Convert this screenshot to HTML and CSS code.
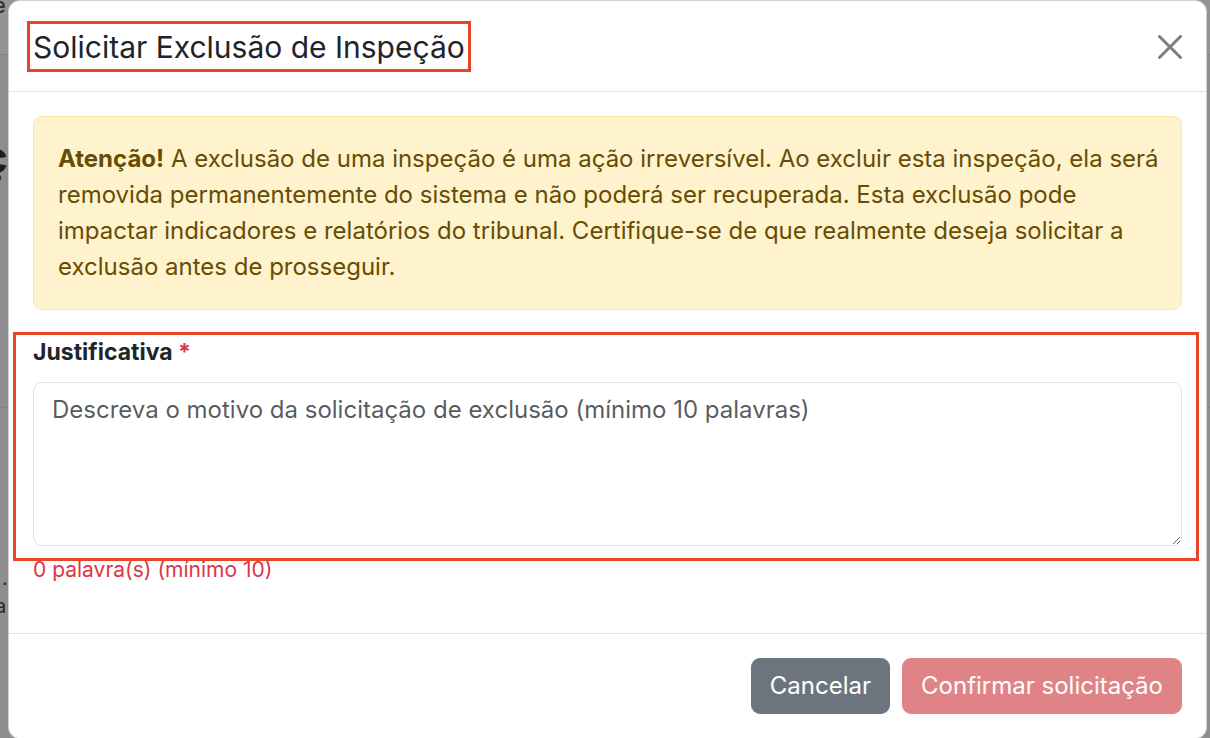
FILE: index.html
```html
<!DOCTYPE html>
<html lang="pt-BR">
<head>
<meta charset="utf-8">
<title>Solicitar Exclusão de Inspeção</title>
<link rel="stylesheet" href="styles.css">
</head>
<body>
<div class="page">
  <div class="page-top"><span class="peek-e">e</span></div>
  <div class="page-main">
    <span class="peek-c">ç</span>
    <div class="peek-line"></div>
    <span class="peek-dot">.</span>
    <span class="peek-a">a</span>
  </div>
</div>

<div class="overlay">
  <div class="modal">
    <div class="modal-header">
      <h5 class="modal-title">Solicitar Exclusão de Inspeção</h5>
      <button class="btn-close" type="button" aria-label="Fechar">
        <svg viewBox="0 0 16 16" width="24" height="24"><path d="M.293.293a1 1 0 0 1 1.414 0L8 6.586 14.293.293a1 1 0 1 1 1.414 1.414L9.414 8l6.293 6.293a1 1 0 0 1-1.414 1.414L8 9.414l-6.293 6.293a1 1 0 0 1-1.414-1.414L6.586 8 .293 1.707a1 1 0 0 1 0-1.414z"/></svg>
      </button>
    </div>
    <div class="modal-body">
      <div class="alert">
        <strong>Atenção!</strong> A exclusão de uma inspeção é uma ação irreversível. Ao excluir esta inspeção, ela será removida permanentemente do sistema e não poderá ser recuperada. Esta exclusão pode impactar indicadores e relatórios do tribunal. Certifique-se de que realmente deseja solicitar a exclusão antes de prosseguir.
      </div>
      <div class="form-group">
        <label class="form-label" for="just">Justificativa <span class="req">*</span></label>
        <textarea id="just" class="form-control" rows="4" placeholder="Descreva o motivo da solicitação de exclusão (mínimo 10 palavras)"></textarea>
        <div class="form-text">0 palavra(s) (mínimo 10)</div>
      </div>
    </div>
    <div class="modal-footer">
      <button class="btn btn-secondary" type="button">Cancelar</button>
      <button class="btn btn-danger" type="button" disabled>Confirmar solicitação</button>
    </div>
    <div class="annot annot-title"></div>
    <div class="annot annot-field"></div>
  </div>
</div>
</body>
</html>
```

FILE: styles.css
```css
* { box-sizing: border-box; }

html, body {
  margin: 0;
  padding: 0;
  width: 1210px;
  height: 738px;
  overflow: hidden;
}

body {
  font-family: Inter, "Noto Sans", "Liberation Sans", sans-serif;
  background: #8e8e8e;
  color: #212529;
  position: relative;
}

/* background page (under the backdrop) */
.page {
  height: 738px;
  display: flex;
  flex-direction: column;
}
.page-top {
  height: 55px;
  background: #939393;
  border-bottom: 1px solid #858585;
  display: flex;
}
.peek-e {
  font-size: 22px;
  line-height: 16px;
  color: #2a2a2a;
  margin-left: -7px;
  margin-top: -3px;
}
.page-main {
  flex: 1;
  display: flex;
  flex-direction: column;
  align-items: flex-start;
}
.peek-c {
  font-size: 44px;
  font-weight: 700;
  color: #1e1e1e;
  margin-left: -18px;
  margin-top: 80px;
  line-height: 44px;
}
.peek-line {
  width: 100%;
  height: 1px;
  background: #858585;
  margin-top: 228px;
}
.peek-dot {
  font-size: 20px;
  color: #2a2a2a;
  margin-top: 160px;
  margin-left: 2px;
  line-height: 20px;
}
.peek-a {
  font-size: 20px;
  color: #2a2a2a;
  margin-top: 8px;
  margin-left: -5px;
  line-height: 20px;
}

/* modal overlay */
.overlay {
  position: absolute;
  inset: 0;
  display: flex;
  align-items: flex-start;
  padding-left: 8px;
}

.modal {
  position: relative;
  width: 1199px;
  height: 739px;
  background: #fff;
  border: 1.5px solid rgba(0, 0, 0, 0.18);
  border-radius: 12px;
  display: flex;
  flex-direction: column;
}

.modal-header {
  display: flex;
  align-items: center;
  justify-content: space-between;
  padding: 26px 24px 24px 24px;
  border-bottom: 1.5px solid #dee2e6;
}

.modal-title {
  margin: 0;
  font-size: 30px;
  font-weight: 400;
  line-height: 40px;
  color: #212529;
}

.btn-close {
  width: 24px;
  height: 24px;
  padding: 0;
  border: 0;
  background: transparent;
  opacity: 0.5;
  display: flex;
}
.btn-close svg { fill: #000; }

.modal-body {
  padding: 24px;
}

.alert {
  background: #fff3cd;
  border: 1.5px solid #ffe69c;
  color: #664d03;
  border-radius: 9px;
  padding: 24px 19px 24px 24px;
  font-size: 24px;
  line-height: 36px;
  margin-bottom: 24px;
}
.alert strong { font-weight: 700; }

.form-group {
  margin-bottom: 24px;
}

.form-label {
  display: block;
  font-size: 23px;
  line-height: 36px;
  font-weight: 700;
  margin-bottom: 12px;
  color: #212529;
}
.req { color: #dc3545; }

.form-control {
  display: block;
  width: 100%;
  height: 164px;
  border: 1.5px solid #dee2e6;
  border-radius: 9px;
  padding: 9px 18px;
  font-family: inherit;
  font-size: 24px;
  line-height: 36px;
  color: #212529;
  resize: vertical;
  background: #fff;
}
.form-control::placeholder {
  color: rgba(33, 37, 41, 0.75);
}

.form-text {
  margin-top: 8px;
  font-size: 21px;
  line-height: 31px;
  color: #dc3545;
}

.modal-footer {
  border-top: 1.5px solid #dee2e6;
  padding: 18px;
  display: flex;
  justify-content: flex-end;
  gap: 12px;
  padding-right: 24px;
}

.btn {
  font-family: inherit;
  font-size: 24px;
  line-height: 36px;
  padding: 9px 18px;
  border-radius: 9px;
  border: 1.5px solid transparent;
  color: #fff;
  margin: 6px 0;
}
.btn-secondary { background: #6c757d; border-color: #6c757d; }
.btn-danger { background: #df8387; border-color: #df8387; }

/* red annotation boxes */
.annot {
  position: absolute;
  border: 3px solid #e9432a;
  pointer-events: none;
}
.annot-title {
  left: 18px;
  top: 20px;
  width: 444px;
  height: 51px;
}
.annot-field {
  left: 3.5px;
  top: 331px;
  width: 1186px;
  height: 229px;
}
```
